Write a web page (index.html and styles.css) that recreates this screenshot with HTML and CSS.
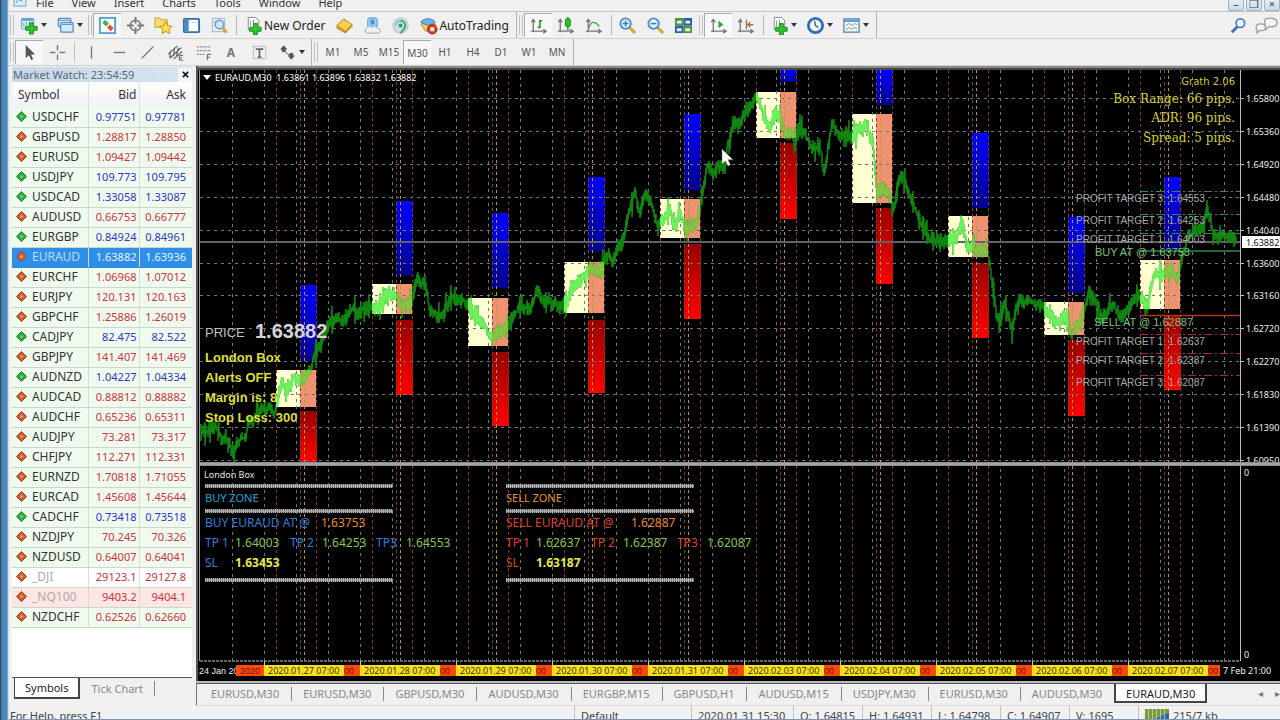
FILE: index.html
```html
<!DOCTYPE html>
<html lang="en">
<head>
<meta charset="utf-8">
<title>EURAUD,M30</title>
<link rel="stylesheet" href="styles.css">
</head>
<body>
<svg class="defs" aria-hidden="true">
  <defs>
    <symbol id="i-new" viewBox="0 0 20 20"><rect x="1.500" y="2.500" width="13" height="11" rx="1" fill="#d8ecfa" stroke="#5b9bc8"/><path d="M2 4h12" stroke="#5b9bc8" stroke-width="2"/><path d="M4 11V7M7 10V6" stroke="#4a9"/><path d="M10 7h4v4h4v4h-4v4h-4v-4H6v-4h4z" fill="#2fc42f" stroke="#168a16"/></symbol>
    <symbol id="i-windows" viewBox="0 0 20 20"><g fill="#d6e9f8" stroke="#5b8fbd" stroke-width="1.400"><rect x="2.500" y="2.500" width="13" height="9" rx="1"/><rect x="5" y="7" width="13" height="10" rx="1"/></g><path d="M3 4.500h12M6 9h11" stroke="#5b8fbd"/></symbol>
    <symbol id="i-watch" viewBox="0 0 20 20"><rect x="2" y="2" width="16" height="16" fill="#fff" stroke="#5c9fd6" stroke-width="2"/><path d="M7.500 4l4 4-3 3-4-4z" fill="#42b842"/><path d="M12.500 9l4 4-3 3-4-4z" fill="#e5542b"/></symbol>
    <symbol id="i-target" viewBox="0 0 20 20"><circle cx="10" cy="10" r="5.500" fill="none" stroke="#777" stroke-width="1.600"/><path d="M10 1v7M10 12v7M1 10h7M12 10h7" stroke="#777" stroke-width="2"/></symbol>
    <symbol id="i-folder" viewBox="0 0 20 20"><path d="M1 2h5l2 2h6v8H1z" fill="#f5dc68" stroke="#c9a227"/><path d="M12.500 6l2 4.200 4.500.6-3.300 3 .9 4.700-4.100-2.300-4.100 2.300.9-4.700-3.300-3 4.500-.6z" fill="#ffe14a" stroke="#c28f12"/></symbol>
    <symbol id="i-panel" viewBox="0 0 20 20"><rect x="2" y="3" width="16" height="14" rx="1" fill="#fff" stroke="#2f6fae" stroke-width="2"/><path d="M3 4h4v12H3z" fill="#4b8ac6"/><path d="M10 7h6" stroke="#bcd"/></symbol>
    <symbol id="i-tester" viewBox="0 0 20 20"><rect x="2.500" y="2.500" width="13" height="14" fill="#e6eff8" stroke="#9bb4cc"/><path d="M4 6h10" stroke="#9bb4cc"/><circle cx="10" cy="9" r="4.500" fill="#cfe6f8" stroke="#6f9bc6" stroke-width="1.500"/><path d="M13 12.500l4.500 5" stroke="#d9a32b" stroke-width="3"/></symbol>
    <symbol id="i-order" viewBox="0 0 20 20"><path d="M4.500 1.500h8l3 3v10h-11z" fill="#fff" stroke="#888"/><path d="M7 5v6M10 4v5" stroke="#888"/><path d="M10 8h4v4h4v4h-4v4h-4v-4H6v-4h4z" fill="#2fc42f" stroke="#168a16"/></symbol>
    <symbol id="i-book" viewBox="0 0 20 20"><path d="M2 10l7-7 9 6-7 8z" fill="#f7cf4c" stroke="#b98618"/><path d="M2 10v3l9 5v-2zM11 18l7-7V9l-7 7z" fill="#d9992a" stroke="#b07a14" stroke-width=".6"/></symbol>
    <symbol id="i-cloud" viewBox="0 0 20 20"><rect x="5" y="2" width="10" height="10" rx="2" fill="#9fd0f5" stroke="#4b93cf"/><path d="M8 4h4v5H8z" fill="#4b93cf"/><path d="M4 18a3.500 3.500 0 010-6c1-2 4-2 5 0 2-2 5-1 6 1 4 0 4 5 1 5z" fill="#e9f1f9" stroke="#8ea7bf"/></symbol>
    <symbol id="i-signal" viewBox="0 0 20 20"><circle cx="10" cy="10" r="8" fill="#c9dfe4" stroke="#a9bfc4"/><path d="M10 5a5 5 0 015 5c0 3-2 5-5 8" fill="none" stroke="#3f9f6a" stroke-width="2"/><path d="M5 10a5 5 0 015-5" fill="none" stroke="#6da8d8" stroke-width="1.500"/><circle cx="10" cy="10" r="2" fill="#2e9e3c"/></symbol>
    <symbol id="i-auto" viewBox="0 0 20 20"><path d="M2 9l7-3 9 3-4 7H7z" fill="#f5cf45" stroke="#bf9420"/><path d="M2 7c1-5 13-6 15 0l-7 3z" fill="#6db4ea" stroke="#3a83bd"/><circle cx="14" cy="14" r="5" fill="#e03a22" stroke="#b02010"/><path d="M12 12h4v4h-4z" fill="#fff"/></symbol>
    <symbol id="i-bars" viewBox="0 0 20 20"><path d="M4.500 4v13M2 16h15M2.500 6.500l2-3 2 3M15 14l3 2-3 2" fill="none" stroke="#777" stroke-width="1.400"/><path d="M11.500 4v9M11.500 5H14M9 12h2.500" stroke="#239a23" stroke-width="1.700" fill="none"/></symbol>
    <symbol id="i-candle" viewBox="0 0 20 20"><path d="M4.500 4v13M2 16h15M2.500 6.500l2-3 2 3M15 14l3 2-3 2" fill="none" stroke="#777" stroke-width="1.400"/><path d="M12.500 1v14" stroke="#168a16" stroke-width="1.400"/><rect x="10" y="3" width="5" height="8" rx="1" fill="#2fc42f" stroke="#168a16"/></symbol>
    <symbol id="i-line" viewBox="0 0 20 20"><path d="M4.500 4v13M2 16h15M2.500 6.500l2-3 2 3M15 14l3 2-3 2" fill="none" stroke="#777" stroke-width="1.400"/><path d="M5 13c2-7 6-9 11-2" fill="none" stroke="#3fa33f" stroke-width="1.400"/></symbol>
    <symbol id="i-zin" viewBox="0 0 20 20"><path d="M12 12l6 6" stroke="#d8a73a" stroke-width="3.200"/><circle cx="8" cy="8" r="5.500" fill="#e4f2fd" stroke="#4b8fca" stroke-width="2"/><path d="M5 8h6M8 5v6" stroke="#3878b4" stroke-width="1.600"/></symbol>
    <symbol id="i-zout" viewBox="0 0 20 20"><path d="M12 12l6 6" stroke="#d8a73a" stroke-width="3.200"/><circle cx="8" cy="8" r="5.500" fill="#e4f2fd" stroke="#4b8fca" stroke-width="2"/><path d="M5 8h6" stroke="#3878b4" stroke-width="1.600"/></symbol>
    <symbol id="i-tile" viewBox="0 0 20 20"><path d="M1 2h9v8H1zM10 10h9v8h-9z" fill="#4c9a2f"/><path d="M10 2h9v8h-9zM1 10h9v8H1z" fill="#2a5fa8"/><path d="M3 5h5v3H3zM12 5h5v3h-5zM3 13h5v3H3zM12 13h5v3h-5z" fill="#e8f2ee"/></symbol>
    <symbol id="i-scroll" viewBox="0 0 20 20"><path d="M4.500 4v13M2 16h15M2.500 6.500l2-3 2 3M15 14l3 2-3 2" fill="none" stroke="#777" stroke-width="1.400"/><path d="M10 5l5 4-5 4z" fill="#2f9f2f"/></symbol>
    <symbol id="i-shift" viewBox="0 0 20 20"><path d="M4.500 4v13M2 16h15M2.500 6.500l2-3 2 3M15 14l3 2-3 2M11 4v10" fill="none" stroke="#777" stroke-width="1.400"/><path d="M18 9h-5M15 6.500l-2.500 2.500 2.500 2.500" fill="none" stroke="#c0502c" stroke-width="1.400"/></symbol>
    <symbol id="i-clock" viewBox="0 0 20 20"><circle cx="10" cy="10" r="7.500" fill="#eef6fd" stroke="#2f6fb2" stroke-width="3"/><path d="M9 5.500l1 4.500 3 2" fill="none" stroke="#555" stroke-width="1.400"/></symbol>
    <symbol id="i-template" viewBox="0 0 20 20"><rect x="2" y="3" width="16" height="14" fill="#f4f9fd" stroke="#5b86ad" stroke-width="1.400"/><path d="M2 5h16" stroke="#5b9bd0" stroke-width="2.500"/><path d="M4 10l3-2 3 2 3-2 3 1M4 15l3-3 3 2 3-2 3 2" fill="none" stroke="#6c9b6c"/></symbol>
    <symbol id="i-cursor" viewBox="0 0 20 20"><path d="M6 2v14l3.500-3 2.200 5 2.200-1-2.200-5H16z" fill="#555"/></symbol>
    <symbol id="i-cross" viewBox="0 0 20 20"><path d="M10 2v6M10 12v6M2 10h6M12 10h6" stroke="#777" stroke-width="1.400"/></symbol>
    <symbol id="i-vline" viewBox="0 0 20 20"><path d="M10 3.500v13" stroke="#777" stroke-width="1.400"/></symbol>
    <symbol id="i-hline" viewBox="0 0 20 20"><path d="M4 10h12" stroke="#777" stroke-width="1.400"/></symbol>
    <symbol id="i-trend" viewBox="0 0 20 20"><path d="M4 16L16 4" stroke="#777" stroke-width="1.400"/></symbol>
    <symbol id="i-channel" viewBox="0 0 20 20"><path d="M2 12L12 3M4 16L16 5M8 17l9-8M5 8l-1 7M9 5l-1 9M13 5l-2 9" stroke="#666" stroke-width="1.300"/><path d="M14 13v5h4M14 15.500h3M14 13h4" fill="none" stroke="#555"/></symbol>
    <symbol id="i-fibo" viewBox="0 0 20 20"><path d="M3 4h14M3 8h14M3 12h9" stroke="#888" stroke-width="1.400" stroke-dasharray="2 1"/><path d="M14 18v-6h4M14 15h3" fill="none" stroke="#555"/></symbol>
    <symbol id="i-label" viewBox="0 0 20 20"><rect x="3.500" y="3.500" width="13" height="13" fill="none" stroke="#888" stroke-dasharray="1 1"/><path d="M6 6.500h8M10 6v9M8 15h4" stroke="#666" stroke-width="1.800" fill="none"/></symbol>
    <symbol id="i-arrows" viewBox="0 0 20 20"><path d="M6 3l3 3.500H7.500V9h-3V6.500H3zM14 17l-3-3.500h1.500V11h3v2.500H17zM7 9l5 4" fill="#555" stroke="#555"/></symbol>
    <symbol id="i-search" viewBox="0 0 20 20"><path d="M9 11l-6 6" stroke="#3f6fb8" stroke-width="3"/><circle cx="12" cy="7.500" r="4.500" fill="#f4f8fd" stroke="#4c7cc4" stroke-width="1.800"/></symbol>
    <symbol id="i-chat" viewBox="0 0 26 20"><g fill="#f4f4f4" stroke="#999" stroke-width="1.300"><path d="M11 5c1-4 13-4 13 2 0 4-5 5-8 4l-4 3z"/><path d="M2 12c0-5 10-5 10 0 0 3-4 4-6 3l-3 3v-3z"/></g></symbol>
    <symbol id="i-app" viewBox="0 0 16 16"><rect x="2" y="1" width="12" height="12" fill="#dcebf7" stroke="#6ea0cb"/><path d="M4 10l3-4 2 2 3-4" fill="none" stroke="#4c8ac0"/></symbol>
  </defs>
</svg>

<div class="app">
  <nav class="menubar">
    <svg class="menu-icon"><use href="#i-app"/></svg>
    <a href="#">File</a><a href="#">View</a><a href="#">Insert</a><a href="#">Charts</a><a href="#">Tools</a><a href="#">Window</a><a href="#">Help</a>
    <div class="win-buttons"><button aria-label="Minimize">–</button><button aria-label="Restore">❐</button><button aria-label="Close">×</button></div>
  </nav>

  <div class="toolbar">
    <div class="group">
      <span class="grip"></span>
      <button class="tool drop" aria-label="New chart"><svg><use href="#i-new"/></svg></button>
      <button class="tool drop" aria-label="Profiles"><svg><use href="#i-windows"/></svg></button>
      <span class="grip"></span>
      <button class="tool active" aria-label="Market Watch"><svg><use href="#i-watch"/></svg></button>
      <button class="tool" aria-label="Data Window"><svg><use href="#i-target"/></svg></button>
      <button class="tool" aria-label="Navigator"><svg><use href="#i-folder"/></svg></button>
      <button class="tool" aria-label="Terminal"><svg><use href="#i-panel"/></svg></button>
      <button class="tool" aria-label="Strategy Tester"><svg><use href="#i-tester"/></svg></button>
      <span class="sep"></span>
      <button class="tool labelled"><svg><use href="#i-order"/></svg>New Order</button>
      <button class="tool" aria-label="MetaEditor"><svg><use href="#i-book"/></svg></button>
      <button class="tool" aria-label="Cloud"><svg><use href="#i-cloud"/></svg></button>
      <button class="tool" aria-label="Signals"><svg><use href="#i-signal"/></svg></button>
      <button class="tool labelled"><svg><use href="#i-auto"/></svg>AutoTrading</button>
    </div>
    <div class="group">
      <span class="grip"></span>
      <button class="tool active" aria-label="Bar chart"><svg><use href="#i-bars"/></svg></button>
      <button class="tool" aria-label="Candlesticks"><svg><use href="#i-candle"/></svg></button>
      <button class="tool" aria-label="Line chart"><svg><use href="#i-line"/></svg></button>
      <span class="sep"></span>
      <button class="tool" aria-label="Zoom in"><svg><use href="#i-zin"/></svg></button>
      <button class="tool" aria-label="Zoom out"><svg><use href="#i-zout"/></svg></button>
      <button class="tool" aria-label="Tile windows"><svg><use href="#i-tile"/></svg></button>
      <span class="grip"></span>
      <button class="tool active" aria-label="Auto scroll"><svg><use href="#i-scroll"/></svg></button>
      <button class="tool" aria-label="Chart shift"><svg><use href="#i-shift"/></svg></button>
      <span class="sep"></span>
      <button class="tool drop" aria-label="Indicators"><svg><use href="#i-order"/></svg></button>
      <button class="tool drop" aria-label="Periods"><svg><use href="#i-clock"/></svg></button>
      <button class="tool drop" aria-label="Templates"><svg><use href="#i-template"/></svg></button>
    </div>
    <div class="toolbar-end">
      <button class="tool" aria-label="Search"><svg><use href="#i-search"/></svg></button>
      <button class="tool" aria-label="Messages"><svg class="wide"><use href="#i-chat"/></svg></button>
    </div>
  </div>

  <div class="toolbar">
    <div class="group">
      <span class="grip"></span>
      <button class="tool active" aria-label="Cursor"><svg><use href="#i-cursor"/></svg></button>
      <button class="tool" aria-label="Crosshair"><svg><use href="#i-cross"/></svg></button>
      <span class="sep"></span>
      <button class="tool" aria-label="Vertical line"><svg><use href="#i-vline"/></svg></button>
      <button class="tool" aria-label="Horizontal line"><svg><use href="#i-hline"/></svg></button>
      <button class="tool" aria-label="Trendline"><svg><use href="#i-trend"/></svg></button>
      <button class="tool" aria-label="Channel"><svg><use href="#i-channel"/></svg></button>
      <button class="tool" aria-label="Fibonacci"><svg><use href="#i-fibo"/></svg></button>
      <button class="tool letter">A</button>
      <button class="tool" aria-label="Text label"><svg><use href="#i-label"/></svg></button>
      <button class="tool drop" aria-label="Arrows"><svg><use href="#i-arrows"/></svg></button>
    </div>
    <div class="group">
      <span class="grip"></span>
      <button class="tool period">M1</button><button class="tool period">M5</button><button class="tool period">M15</button><button class="tool period active">M30</button><button class="tool period">H1</button><button class="tool period">H4</button><button class="tool period">D1</button><button class="tool period">W1</button><button class="tool period">MN</button>
    </div>
  </div>

  <main class="workspace">
    <aside class="watch">
      <header class="watch-title"><span>Market Watch: 23:54:59</span><button aria-label="Close panel"><svg viewBox="0 0 8 8"><path d="M1 1l6 6M7 1L1 7" stroke="#111" stroke-width="1.800"/></svg></button></header>
      <div class="watch-body">
        <table class="quotes">
          <thead><tr><th>Symbol</th><th>Bid</th><th>Ask</th></tr></thead>
          <tbody id="quotes"></tbody>
        </table>
      </div>
      <div class="watch-tabs"><button class="active">Symbols</button><button>Tick Chart</button></div>
    </aside>
    <section class="chart-area">
      <svg id="chart" class="chart" viewBox="196 66 1084 617" preserveAspectRatio="xMinYMin meet" role="img" aria-label="EURAUD M30 chart"></svg>
      <div class="chart-tabs">
        <button>EURUSD,M30</button><button>EURUSD,M30</button><button>GBPUSD,M30</button><button>AUDUSD,M30</button><button>EURGBP,M15</button><button>GBPUSD,H1</button><button>AUDUSD,M15</button><button>USDJPY,M30</button><button>EURUSD,M30</button><button>AUDUSD,M30</button><button class="active">EURAUD,M30</button>
        <span class="scrollers"><span>◂</span><span>▸</span></span>
      </div>
    </section>
  </main>

  <footer class="status">
    <span class="help">For Help, press F1</span>
    <span class="w-profile">Default</span>
    <span class="w-time">2020.01.31 15:30</span>
    <span class="w-price">O: 1.64815</span>
    <span class="w-price">H: 1.64931</span>
    <span class="w-price">L: 1.64798</span>
    <span class="w-price">C: 1.64907</span>
    <span class="w-price">V: 1695</span>
    <span class="w-net"><svg viewBox="0 0 24 16"><path d="M0 0h24v3L0 14z" fill="#7d9b35"/><path d="M0 16V14L24 3v13z" fill="#2c6f9c"/><path d="M3.500 0v16M7.500 0v16M11.500 0v16M15.500 0v16M19.500 0v16" stroke="#dfe8d8" stroke-width=".6"/></svg>215/7 kb</span>
  </footer>
</div>
<script src="app.js"></script>
</body>
</html>
```

FILE: styles.css
```css
* { box-sizing: border-box; }

body {
  margin: 0;
  font-family: "Noto Sans", "Open Sans", sans-serif;
  font-size: 12px;
  color: #333;
}

button {
  font: inherit;
  color: inherit;
  border: 0;
  padding: 0;
  background: none;
}

.defs { position: absolute; width: 0; height: 0; }

.app {
  height: 100vh;
  display: flex;
  flex-direction: column;
  overflow: hidden;
  padding-left: 9px;
  background: linear-gradient(90deg, #24405e 0, #4f7fae 2px, #4f8fc4 5px, #3f7fb4 7px, #c4daec 8px, #f0f0f0 10px);
}

/* Menu */
.menubar {
  flex: none;
  height: 12px;
  display: flex;
  align-items: flex-end;
  gap: 18px;
  padding-left: 3px;
  overflow: hidden;
  border-bottom: 1px solid #c4c4c4;
}
.menubar a { color: #333; font-size: 11px; text-decoration: none; line-height: 16px; }
.menu-icon { width: 16px; height: 16px; margin-right: -10px; margin-bottom: 2px; flex: none; }
.win-buttons { margin-left: auto; display: flex; gap: 2px; }
.win-buttons button {
  width: 16px;
  height: 14px;
  line-height: 12px;
  font-size: 11px;
  color: #445;
  background: linear-gradient(#e8f1f9, #c9dbea);
  border: 1px solid #9fb2c4;
  border-radius: 2px;
}

/* Toolbars */
.toolbar {
  flex: none;
  height: 27px;
  display: flex;
  align-items: stretch;
  border-bottom: 1px solid #d0d0d0;
}
.group {
  display: flex;
  align-items: center;
  padding-right: 2px;
  border-right: 1px solid #b4b4b4;
}
.group + .group { margin-left: 1px; }
.grip {
  width: 4px;
  height: 20px;
  margin: 0 1px;
  border-left: 1px solid #c0c0c0;
  border-right: 1px solid #c0c0c0;
}
.sep { width: 1px; height: 20px; margin: 0 2px 0 3px; background: #bbb; }
.tool {
  flex: none;
  width: 28px;
  height: 24px;
  display: flex;
  align-items: center;
  justify-content: center;
}
.tool svg { width: 19px; height: 19px; flex: none; }
.tool svg.wide { width: 25px; }
.tool.active {
  background: #f8f8f8;
  border-top: 1px solid #aaa;
  border-left: 1px solid #aaa;
}
.tool.drop { width: 36px; gap: 2px; }
.tool.drop::after {
  content: "";
  border: 3px solid transparent;
  border-top: 4px solid #333;
  border-bottom: 0;
}
.tool.labelled { width: auto; padding: 0 5px; gap: 1px; color: #222; }
.tool.letter { font-weight: 700; color: #777; }
.tool.period { font-size: 10px; color: #555; }
.toolbar-end { margin-left: auto; display: flex; align-items: center; }

/* Workspace */
.workspace { flex: 1; min-height: 0; display: flex; }

.watch {
  width: 187px;
  flex: none;
  display: flex;
  flex-direction: column;
  padding: 1px 4px 7px 3px;
  background: #f0f0f0;
}
.watch-title {
  display: flex;
  align-items: center;
  height: 15px;
  padding-left: 1px;
  font-size: 11px;
  color: #5a6673;
  background: linear-gradient(90deg, #c6d8e8, #d6e4f2);
}
.watch-title button { width: 14px; height: 14px; margin-left: auto; background: #f4f4f4; }
.watch-title svg { width: 7px; height: 7px; display: block; margin: auto; }
.watch-body { flex: 1; min-height: 0; overflow: hidden; background: #fff; border-bottom: 1px solid #555; }

.quotes { width: 100%; border-collapse: collapse; table-layout: fixed; }
.quotes tr { height: 20px; }
.quotes thead tr { height: 25px; }
.quotes th, .quotes td { padding: 0 6px 0 0; line-height: 18px; white-space: nowrap; text-align: right; }
.quotes th { font-weight: 400; background: linear-gradient(#fff, #f1f1f3); border-right: 1px solid #e2e2e2; }
.quotes td { font-size: 11px; background: #f0fbf0; border-right: 1px solid #d5ddd5; border-bottom: 1px solid #cdd6cd; }
.quotes th:first-child { width: 76px; text-align: left; padding-left: 6px; }
.quotes td:first-child { font-size: 12px; text-align: left; padding-left: 4px; }
.quotes th:nth-child(2) { width: 51px; }
.quotes td:nth-child(2), .quotes th:nth-child(2) { padding-right: 2px; }
.quotes th:last-child, .quotes td:last-child { border-right: 0; }
.quotes svg { width: 11px; height: 11px; margin-right: 5px; vertical-align: -1px; }
.quotes .up td { color: #2b36c8; }
.quotes .down td { color: #d03038; }
.quotes td.name { color: #333; }
.quotes .muted td.name { color: #aaa; }
.quotes .plain td { background: #fff; }
.quotes .alert td { background: #fee6e4; }
.quotes .selected td { background: #2f8fe8; color: #e8f4ff; border-bottom-color: #2f8fe8; }
.quotes .selected td.name { color: #b8dcff; }

.watch-tabs { flex: none; height: 21px; display: flex; align-items: center; color: #888; font-size: 11px; }
.watch-tabs button { height: 15px; line-height: 13px; padding: 0 11px; border-right: 1px solid #888; }
.watch-tabs .active {
  height: 21px;
  margin-top: -1px;
  padding: 0 10px;
  margin-left: 2px;
  color: #222;
  background: #fff;
  border: 1px solid #444;
  border-top: 0;
  border-width: 0 2px 2px 1px;
}

.chart-area { flex: 1; min-width: 0; display: flex; flex-direction: column; background: #f0f0f0; }
.chart { flex: 1; min-height: 0; width: 100%; display: block; }

.chart-tabs {
  flex: none;
  height: 23px;
  display: flex;
  align-items: flex-start;
  padding-left: 3px;
  border-top: 1px solid #555;
  border-left: 1px solid #777;
  border-bottom: 1px solid #d8d8d8;
  font-size: 11px;
  color: #888;
}
.chart-tabs button { height: 14px; line-height: 14px; padding: 0 12px 0 11px; margin-top: 3px; border-right: 1px solid #888; }
.chart-tabs button:nth-last-child(3) { border-right: 0; }
.chart-tabs .active {
  height: 19px;
  line-height: 19px;
  margin-top: 0;
  padding: 0 10px;
  color: #222;
  background: #fff;
  border: 1px solid #444;
  border-width: 0 2px 2px 2px;
}
.scrollers { margin-left: auto; display: flex; gap: 12px; line-height: 19px; font-size: 10px; color: #777; }

/* Status bar */
.status {
  flex: none;
  height: 14px;
  display: flex;
  align-items: flex-start;
  overflow: hidden;
  line-height: 20px;
  font-size: 11px;
  color: #444;
  background: #f2f2f2;
  border-bottom: 1px solid #7c98b8;
}
.status span { flex: none; padding-left: 6px; border-left: 1px solid #c2c2c2; white-space: nowrap; }
.status .help { flex: 1; padding-left: 1px; border-left: 0; }
.w-profile { width: 117px; }
.w-time { width: 102px; }
.w-price { width: 69px; }
.w-net { width: 142px; display: flex; gap: 4px; }
.w-net svg { width: 24px; height: 16px; margin-top: 3px; }

/* Chart drawing */
.grid { stroke: #70757c; stroke-width: 1; stroke-dasharray: 3 4; }
.session { stroke: #8c3c1c; stroke-width: 1; stroke-dasharray: 3 3; }
.session-open { stroke: #b09c30; stroke-width: 1; stroke-dasharray: 3 3; }
.price-path { fill: none; stroke-width: 1.500; }
.tahoma { font-family: "DejaVu Sans", sans-serif; font-size: 10px; }
.axis { font-family: "Noto Sans", sans-serif; font-size: 9px; }
.panel-text { font-family: "Noto Sans", sans-serif; font-size: 12px; }
.panel-title { font-family: "Noto Sans", sans-serif; font-size: 11px; }
.arial { font-family: "Liberation Sans", Arial, sans-serif; }
.serif { font-family: "DejaVu Serif", serif; font-size: 12px; }
.medium { stroke: currentColor; }
.bold { font-weight: 700; }
```

FILE: app.js
```js
const quotes = [
  ["USDCHF", "0.97751", "0.97781", "up"], ["GBPUSD", "1.28817", "1.28850", "down"],
  ["EURUSD", "1.09427", "1.09442", "down"], ["USDJPY", "109.773", "109.795", "up"],
  ["USDCAD", "1.33058", "1.33087", "up"], ["AUDUSD", "0.66753", "0.66777", "down"],
  ["EURGBP", "0.84924", "0.84961", "up"], ["EURAUD", "1.63882", "1.63936", "down selected"],
  ["EURCHF", "1.06968", "1.07012", "down"], ["EURJPY", "120.131", "120.163", "down"],
  ["GBPCHF", "1.25886", "1.26019", "down"], ["CADJPY", "82.475", "82.522", "up"],
  ["GBPJPY", "141.407", "141.469", "down"], ["AUDNZD", "1.04227", "1.04334", "up"],
  ["AUDCAD", "0.88812", "0.88882", "down"], ["AUDCHF", "0.65236", "0.65311", "down"],
  ["AUDJPY", "73.281", "73.317", "down"], ["CHFJPY", "112.271", "112.331", "down"],
  ["EURNZD", "1.70818", "1.71055", "down"], ["EURCAD", "1.45608", "1.45644", "down"],
  ["CADCHF", "0.73418", "0.73518", "up"], ["NZDJPY", "70.245", "70.326", "down"],
  ["NZDUSD", "0.64007", "0.64041", "down"], ["_DJI", "29123.1", "29127.8", "down muted plain"],
  ["_NQ100", "9403.2", "9404.1", "down muted alert"], ["NZDCHF", "0.62526", "0.62660", "down"]
];

document.getElementById("quotes").innerHTML = quotes.map(([name, bid, ask, cls]) => {
  const fill = cls.startsWith("up") ? "#2fae44" : "#d2602f";
  const edge = cls.startsWith("up") ? "#1d8a30" : "#9c3f1c";
  return `<tr class="${cls}"><td class="name"><svg viewBox="0 0 11 11"><path d="M5.5 .5l5 5-5 5-5-5z" fill="${fill}" stroke="${edge}"/><path d="M5.500 4l1.500 1.500-1.500 1.500-1.500-1.500z" fill="#fff" opacity=".45"/></svg>${name}</td><td>${bid}</td><td>${ask}</td></tr>`;
}).join("");

const out = [];
const rect = (x, y, w, h, fill) => out.push(`<rect x="${x}" y="${y}" width="${w}" height="${h}" fill="${fill}"/>`);
const line = (x1, y1, x2, y2, attrs) => out.push(`<path d="M${x1} ${y1}L${x2} ${y2}" ${attrs}/>`);
const text = (x, y, value, fill, cls = "tahoma", attrs = "") =>
  out.push(`<text x="${x}" y="${y}" fill="${fill}" class="${cls}" ${attrs}>${value}</text>`);

// Each session: box top/bottom, blue top/bottom, red top/bottom
const sessions = [
  [370, 407, 285, 361, 411, 462], [284, 314, 201, 275, 320, 395], [298, 346, 213, 288, 352, 426],
  [262, 313, 177, 251, 320, 393], [199, 238, 114, 190, 244, 319], [92, 138, 70, 82, 143, 219],
  [114, 203, 70, 105, 208, 284], [216, 257, 133, 208, 263, 338], [302, 335, 217, 293, 340, 416],
  [260, 309, 177, 249, 315, 390]
];

const track = [
  200,427,206,432,212,427,218,430,222,442,226,437,232,450,236,446,240,440,246,437,248,424,254,418,
  262,407,275,412,282,379,286,393,293,378,300,382,310,372,314,356,320,345,327,327,333,320,345,320,
  352,308,357,313,370,307,380,308,387,290,394,295,403,306,412,303,417,275,421,285,425,283,430,310,
  437,316,443,312,453,297,467,303,477,317,483,323,492,340,497,333,505,330,513,315,520,308,532,307,
  537,290,543,300,553,303,560,308,567,303,573,287,583,277,590,267,600,273,607,252,613,261,623,240,
  628,217,635,192,640,215,644,194,650,200,657,222,663,222,670,208,674,228,680,216,687,232,697,222,
  703,193,707,165,713,173,720,166,725,167,727,148,733,123,740,122,747,111,756,96,763,113,769,128,
  775,113,780,120,785,133,792,132,795,143,800,125,807,137,813,150,820,144,824,175,832,124,838,133,
  852,137,865,124,873,143,877,193,883,187,890,197,894,208,898,184,903,176,910,197,920,223,930,238,
  948,242,957,237,962,223,967,246,980,250,988,250,992,283,997,318,1000,323,1004,302,1012,328,
  1018,301,1030,302,1043,307,1055,321,1065,317,1072,333,1078,327,1083,313,1088,296,1095,299,
  1102,319,1113,303,1120,316,1130,307,1138,294,1147,306,1155,272,1163,277,1170,267,1177,281,
  1182,260,1188,238,1197,230,1203,228,1207,205,1212,230,1217,238,1227,235,1236,241
];

// Bar-by-bar price path between the track points
let seed = 17;
const random = () => (seed = (seed * 16807) % 2147483647) / 2147483647;
let d = `M${track[0]} ${track[1]}`;
for (let i = 2; i < track.length; i += 2) {
  const [x0, y0, x1, y1] = track.slice(i - 2, i + 2);
  for (let x = x0 + 1; x <= x1; x++) {
    const mid = y0 + (y1 - y0) * (x - x0) / (x1 - x0);
    const reach = random() < 0.2 ? 16 : 8;
    d += `L${x} ${Math.round(mid - random() * reach)}L${x} ${Math.round(mid + random() * reach)}`;
  }
}

out.push(`<defs>
  <linearGradient id="blue" x2="0" y2="1"><stop stop-color="#0000ff"/><stop offset="1" stop-color="#000090"/></linearGradient>
  <linearGradient id="red" x2="0" y2="1"><stop stop-color="#960000"/><stop offset="1" stop-color="#ff0000"/></linearGradient>
  <clipPath id="cream">${sessions.map((s, k) => `<rect x="${276 + 96 * k}" y="${s[0]}" width="24" height="${s[1] - s[0]}"/>`).join("")}</clipPath>
  <clipPath id="salmon">${sessions.map((s, k) => `<rect x="${300 + 96 * k}" y="${s[0]}" width="16" height="${s[1] - s[0]}"/>`).join("")}</clipPath>
</defs>`);

rect(196, 66, 1084, 617, "#000");
rect(196, 66, 1084, 2, "#8a8a8a");
rect(196, 68, 1084, 2, "#484848");
rect(196, 66, 2, 617, "#555");
rect(196, 681, 1084, 2, "#bbb");

sessions.forEach(([bt, bb, ut, ub, rt, rb], k) => {
  const x = 276 + 96 * k;
  rect(x, bt, 24, bb - bt, "#ffffd2");
  rect(x + 24, bt, 16, bb - bt, "#ee9272");
  rect(x + 24, ut, 17, ub - ut, "url(#blue)");
  rect(x + 24, rt, 17, rb - rt, "url(#red)");
});

for (let k = 0; k < 12; k++) line(200, Math.round(98 + 32.9 * k) + 0.5, 1240, Math.round(98 + 32.9 * k) + 0.5, 'class="grid"');
for (let k = 0; k < 32; k++) line(232.5 + 32 * k, 70, 232.5 + 32 * k, 660, 'class="grid"');
for (let k = 0; k < 10; k++) {
  for (const dx of [276.5, 300.5, 316.5]) line(dx + 96 * k, 70, dx + 96 * k, 660, 'class="session"');
  line(304.5 + 96 * k, 70, 304.5 + 96 * k, 660, 'class="session-open"');
}
line(200, 242, 1240, 242, 'stroke="#5c636b" stroke-width="2"');

out.push(`<path d="${d}" class="price-path" stroke="#0f860f"/>`);
out.push(`<path d="${d}" class="price-path" stroke="#6cf25c" clip-path="url(#cream)"/>`);
out.push(`<path d="${d}" class="price-path" stroke="#84c444" clip-path="url(#salmon)"/>`);

// Trade levels
for (const y of [191.5, 214.5, 233.5]) line(1140, y, 1240, y, 'stroke="#2a8a5a" stroke-dasharray="8 3 2 3"');
line(1140, 251, 1240, 251, 'stroke="#2a8a5a" stroke-width="1.500"');
line(1140, 315.5, 1240, 315.5, 'stroke="#b8341c" stroke-width="1.500"');
for (const y of [334.5, 353.5, 375.5]) line(1140, y, 1240, y, 'stroke="#a8301a" stroke-dasharray="8 3 2 3"');
for (const [y, v] of [[202, "3: 1.64553"], [224, "2: 1.64253"], [243, "1: 1.64003"], [345, "1: 1.62637"], [364, "2: 1.62387"], [386, "3: 1.62087"]])
  text(1076, y, "PROFIT TARGET " + v, "#a8a8a8", "arial", 'font-size="10"');
text(1095, 256, "BUY AT @ 1.63753", "#7fc07f", "arial", 'font-size="11"');
text(1094, 326, "SELL AT @ 1.62887", "#7fc07f", "arial", 'font-size="11"');

// Price axis
line(1240.5, 70, 1240.5, 661, 'stroke="#bbb"');
line(199.5, 70, 199.5, 661, 'stroke="#999"');
["1.65800", "1.65360", "1.64920", "1.64480", "1.64040", "1.63600", "1.63160", "1.62720", "1.62270", "1.61830", "1.61390", "1.60950"]
  .forEach((v, k) => {
    text(1246, Math.round(98 + 32.9 * k) + 4, v, "#eee", "axis");
    line(1240, Math.round(98 + 32.9 * k) + 0.5, 1244, Math.round(98 + 32.9 * k) + 0.5, 'stroke="#bbb"');
  });
rect(1242, 236, 38, 12, "#fff");
text(1246, 246, "1.63882", "#111", "axis");

// Chart captions
out.push('<path d="M203 75h8l-4 5z" fill="#fff"/>');
text(215, 81, "EURAUD,M30&#160; 1.63861 1.63896 1.63832 1.63882", "#fff", "axis");
text(1235, 85, "Grath 2.06", "#d0c830", "tahoma", 'text-anchor="end"');
text(1235, 103, "Box Range: 66 pips.", "#d8d030", "serif", 'text-anchor="end"');
text(1235, 122, "ADR: 96 pips.", "#d8d030", "serif", 'text-anchor="end"');
text(1235, 142, "Spread: 5 pips.", "#d8d030", "serif", 'text-anchor="end"');
text(205, 337, "PRICE", "#c0c0c0", "arial", 'font-size="13"');
text(255, 338, "1.63882", "#d4d4d8", "arial bold", 'font-size="20"');
text(205, 362, "London Box", "#dede3c", "arial bold", 'font-size="13"');
text(205, 382, "Alerts OFF", "#dede3c", "arial bold", 'font-size="13"');
text(205, 402, "Margin is: 8", "#dede3c", "arial bold", 'font-size="13"');
text(205, 422, "Stop Loss: 300", "#dede3c", "arial bold", 'font-size="13"');
out.push('<path d="M722 149v15l3.500-3 2.500 5 2.500-1.200-2.500-5h5z" fill="#fff" stroke="#777" stroke-width=".6"/>');

// Indicator window
rect(199, 462, 1081, 4, "#8c8c8c");
line(199, 464, 1280, 464, 'stroke="#bdbdbd"');
text(204, 478, "London Box", "#e4e4e4", "axis");
for (const x of [205, 506])
  for (const y of [486, 511, 580]) {
    line(x, y, x + 188, y, 'stroke="#8c8c8c" stroke-width="3"');
    line(x, y, x + 188, y, 'stroke="#b4b4b4" stroke-width="4" stroke-dasharray="1 1"');
  }
const zone = (x, title, action, priceX, price, c1, c2, values, sl) => {
  text(x, 502, title, c1, "panel-title");
  text(x, 527, action, c2, "panel-text");
  text(priceX, 527, price, "#e8882c", "panel-text");
  text(x, 547, "TP 1", c2, "panel-text");
  text(x + 85, 547, "TP 2", c2, "panel-text");
  text(x + 171, 547, "TP3", c2, "panel-text");
  [30, 117, 201].forEach((dx, i) => text(x + dx, 547, values[i], "#84c84c", "panel-text"));
  text(x, 567, "SL", c2, "panel-text");
  text(x + 30, 567, sl, "#e8e84c", "panel-text bold");
};
zone(205, "BUY ZONE", "BUY EURAUD AT @", 321, "1.63753", "#1ba4d8", "#2f7fd8", ["1.64003", "1.64253", "1.64553"], "1.63453");
zone(506, "SELL ZONE", "SELL EURAUD AT @", 631, "1.62887", "#e8962c", "#dc4420", ["1.62637", "1.62387", "1.62087"], "1.63187");
text(1244, 476, "0", "#eee", "axis");
text(1244, 658, "0", "#eee", "axis");

// Time axis
line(200, 661, 1240, 661, 'stroke="#ccc" stroke-dasharray="3 1"');
text(199, 674, "24 Jan 20", "#eee", "arial", 'font-size="9"');
rect(236, 665, 28, 11, "#ff4a0c");
text(240, 674, "2020", "#5a1400", "arial", 'font-size="9"');
["01.27", "01.28", "01.29", "01.30", "01.31", "02.03", "02.04", "02.05", "02.06", "02.07"].forEach((day, k) => {
  const x = 264 + 96 * k;
  rect(x, 665, 80, 11, "#f8e01c");
  rect(x + 80, 665, k < 9 ? 16 : 12, 11, "#ff4a0c");
  text(x + 4, 674, `2020.${day} 07:00`, "#3c3400", "axis");
  text(x + 80, 674, "00", "#5a1400", "arial", 'font-size="9"');
  line(x + 0.5, 661, x + 0.5, 665, 'stroke="#ccc"');
});
text(1223, 674, "7 Feb 21:00", "#eee", "axis");

document.getElementById("chart").innerHTML = out.join("");
```
